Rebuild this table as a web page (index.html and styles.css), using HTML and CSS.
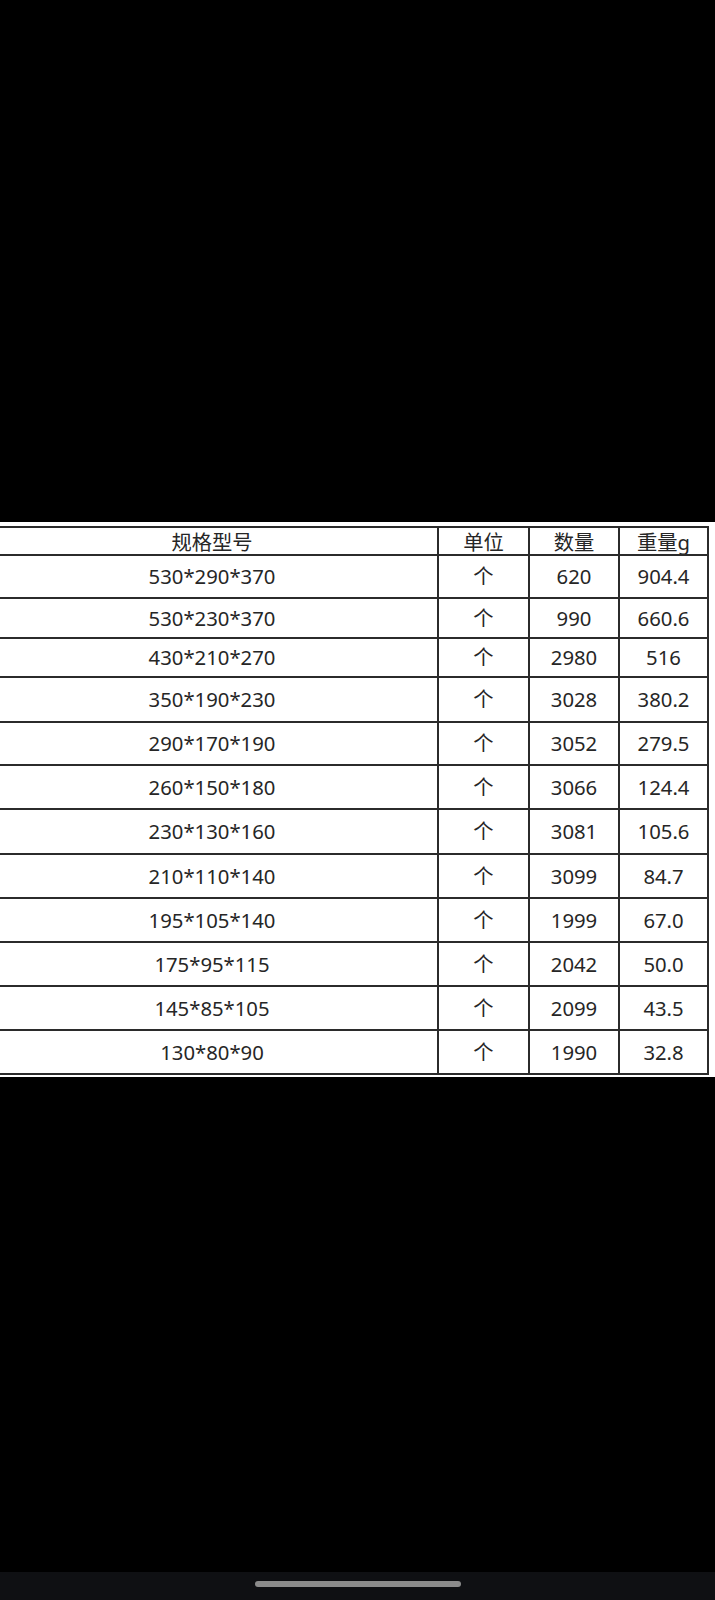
FILE: index.html
```html
<!DOCTYPE html>
<html lang="zh-CN">
<head>
<meta charset="utf-8">
<title>规格型号</title>
<link rel="stylesheet" href="styles.css">
</head>
<body>
<div class="screen">
  <div class="top-space"></div>
  <div class="sheet">
    <div class="grid">
      <div class="cell head">规格型号</div><div class="cell head">单位</div><div class="cell head">数量</div><div class="cell head">重量g</div>
      <div class="cell">530*290*370</div><div class="cell">个</div><div class="cell">620</div><div class="cell">904.4</div>
      <div class="cell">530*230*370</div><div class="cell">个</div><div class="cell">990</div><div class="cell">660.6</div>
      <div class="cell">430*210*270</div><div class="cell">个</div><div class="cell">2980</div><div class="cell">516</div>
      <div class="cell">350*190*230</div><div class="cell">个</div><div class="cell">3028</div><div class="cell">380.2</div>
      <div class="cell">290*170*190</div><div class="cell">个</div><div class="cell">3052</div><div class="cell">279.5</div>
      <div class="cell">260*150*180</div><div class="cell">个</div><div class="cell">3066</div><div class="cell">124.4</div>
      <div class="cell">230*130*160</div><div class="cell">个</div><div class="cell">3081</div><div class="cell">105.6</div>
      <div class="cell">210*110*140</div><div class="cell">个</div><div class="cell">3099</div><div class="cell">84.7</div>
      <div class="cell">195*105*140</div><div class="cell">个</div><div class="cell">1999</div><div class="cell">67.0</div>
      <div class="cell">175*95*115</div><div class="cell">个</div><div class="cell">2042</div><div class="cell">50.0</div>
      <div class="cell">145*85*105</div><div class="cell">个</div><div class="cell">2099</div><div class="cell">43.5</div>
      <div class="cell">130*80*90</div><div class="cell">个</div><div class="cell">1990</div><div class="cell">32.8</div>
    </div>
  </div>
  <div class="bottom-space"></div>
  <div class="navbar"><div class="pill"></div></div>
</div>
</body>
</html>
```

FILE: styles.css
```css
html, body {
  margin: 0;
  padding: 0;
  background: #000;
}
.screen {
  width: 715px;
  height: 1600px;
  display: flex;
  flex-direction: column;
  overflow: hidden;
  background: #000;
}
.top-space {
  height: 522px;
  flex: none;
}
.sheet {
  height: 555px;
  flex: none;
  background: #fff;
  padding-top: 4px;
  box-sizing: border-box;
  overflow: hidden;
}
.grid {
  display: grid;
  width: 722px;
  margin-left: -15px;
  grid-template-columns: 452px 91px 90px 89px;
  grid-template-rows: 28px 43px 40px 39px 45px 43px 44px 45px 44px 44px 44px 44px 44px;
  border-right: 2px solid #2b2b2b;
  border-bottom: 2px solid #2b2b2b;
  box-sizing: content-box;
}
.cell {
  border-left: 2px solid #2b2b2b;
  border-top: 2px solid #2b2b2b;
  display: flex;
  align-items: center;
  justify-content: center;
  font-family: "Noto Sans", "Noto Sans CJK SC", sans-serif;
  font-size: 20.3px;
  color: #262626;
  line-height: 1;
  min-width: 0;
}
.head {
  padding-top: 3px;
}
.bottom-space {
  flex: 1;
}
.navbar {
  height: 28px;
  flex: none;
  background: #0f1013;
  display: flex;
  justify-content: center;
  padding-top: 9px;
  box-sizing: border-box;
}
.pill {
  width: 206px;
  height: 6px;
  border-radius: 3px;
  background: #8b8b8b;
}
```
